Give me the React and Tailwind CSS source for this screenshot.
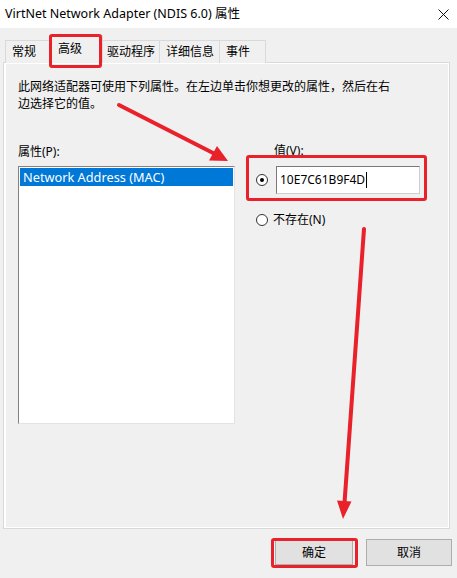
import React from "react";

const FONT = { fontFamily: "'Noto Sans','Noto Sans CJK SC',sans-serif" };

function Tab({ label, w, selected }) {
  if (selected) {
    return (
      <div
        className={`relative z-10 -mx-[2px] h-[28px] ${w} border border-b-0 border-[#d9d9d9] bg-[#f0f0f0] flex items-center pl-[8px] text-[12px] text-black`}
      >
        <span className="-mt-[2px]">{label}</span>
      </div>
    );
  }
  return (
    <div
      className={`h-[23px] ${w} border border-b-0 border-l-0 first:border-l border-[#d9d9d9] bg-[#f0f0f0] flex items-center pl-[6px] text-[12px] text-black`}
    >
      {label}
    </div>
  );
}

function Radio({ checked }) {
  return (
    <div className="w-[12px] h-[12px] rounded-full border border-[#333] bg-white flex items-center justify-center">
      {checked && <div className="w-[4px] h-[4px] rounded-full bg-black" />}
    </div>
  );
}

export default function App() {
  return (
    <div
      className="relative w-[457px] h-[578px] bg-[#f0f0f0] overflow-hidden text-black"
      style={FONT}
    >
      {/* Title bar */}
      <div className="h-[28px] bg-white flex items-center justify-between pl-[5px] pr-[8px]">
        <span className="text-[12.5px] leading-none">
          VirtNet Network Adapter (NDIS 6.0) 属性
        </span>
        <svg width="11" height="11" viewBox="0 0 11 11">
          <path d="M0.5 0.5 L10.5 10.5 M10.5 0.5 L0.5 10.5" stroke="#111" strokeWidth="1" />
        </svg>
      </div>

      {/* Tabs */}
      <div className="pl-[5px] pt-[11px] flex items-end h-[34px]">
        <div className="flex items-end -mb-px">
          <Tab label="常规" w="w-[46px]" />
          <Tab label="高级" w="w-[54px]" selected />
          <Tab label="驱动程序" w="w-[59px]" />
          <Tab label="详细信息" w="w-[60px]" />
          <Tab label="事件" w="w-[46px]" />
        </div>
      </div>

      {/* Panel */}
      <div className="ml-[3px] w-[447px] h-[467px] border border-[#d9d9d9] bg-[#f0f0f0] shadow-[inset_2px_1px_0_#ffffff,inset_-1px_-1px_0_#ffffff]">
        <div className="pl-[14px] pt-[15px] text-[12px] leading-[17px]">
          <div>此网络适配器可使用下列属性。在左边单击你想更改的属性，然后在右</div>
          <div>边选择它的值。</div>
        </div>

        <div className="flex mt-[32px]">
          {/* Left column */}
          <div className="pl-[14px] w-[232px]">
            <div className="text-[12px] leading-[16px]">属性(P):</div>
            <div className="mt-[6px] w-[217px] h-[258px] bg-white border border-t-[#828282] border-l-[#828282] border-r-[#e3e3e3] border-b-[#e3e3e3] p-px">
              <div className="h-[18px] bg-[#0078d7] text-white text-[12.75px] leading-[18px] pl-[3px]">
                Network Address (MAC)
              </div>
            </div>
          </div>

          {/* Right column */}
          <div className="pl-[20px] -mt-[1px]">
            <div className="pl-[18px] text-[12px] leading-[16px]">值(V):</div>
            <div className="flex items-center mt-[7px]">
              <Radio checked />
              <div className="ml-[8px] w-[144px] h-[28px] bg-white border border-t-[#7a7a7a] border-l-[#7a7a7a] border-r-[#cfcfcf] border-b-[#cfcfcf] flex items-center pl-[3px] text-[12px]">
                <span>10E7C61B9F4D</span>
                <span className="w-px h-[16px] bg-black ml-[1px]" />
              </div>
            </div>
            <div className="flex items-center mt-[17px]">
              <Radio />
              <span className="ml-[5px] text-[12px]">不存在(N)</span>
            </div>
          </div>
        </div>
      </div>

      {/* Buttons */}
      <div className="flex justify-end gap-[13px] pr-[5px] mt-[11px]">
        <div className="w-[78px] h-[25px] bg-[#e1e1e1] border border-[#adadad] flex items-center justify-center text-[12px]">
          确定
        </div>
        <div className="w-[86px] h-[27px] -mt-px bg-[#e1e1e1] border border-[#adadad] flex items-center justify-center text-[12px]">
          取消
        </div>
      </div>

      {/* Red annotations overlay */}
      <div className="absolute z-20 left-[49px] top-[34px] w-[53px] h-[34px] border-[3px] border-[#e8212b] rounded-[3px] pointer-events-none" />
      <div className="absolute z-20 left-[246px] top-[155px] w-[181px] h-[46px] border-[3px] border-[#e8212b] rounded-[3px] pointer-events-none" />
      <div className="absolute z-20 left-[271px] top-[538px] w-[87px] h-[30px] border-[3px] border-[#e8212b] rounded-[3px] pointer-events-none" />

      <svg className="absolute z-20 inset-0 pointer-events-none" width="457" height="578" viewBox="0 0 457 578">
        <line x1="119" y1="105" x2="215" y2="154" stroke="#e8212b" strokeWidth="4" strokeLinecap="round" />
        <polygon points="228,161 209,160.5 217,146" fill="#e8212b" />
        <line x1="364" y1="229" x2="344.5" y2="503" stroke="#e8212b" strokeWidth="4" strokeLinecap="round" />
        <polygon points="343,519 351.5,501.5 337,500.5" fill="#e8212b" />
      </svg>
    </div>
  );
}
